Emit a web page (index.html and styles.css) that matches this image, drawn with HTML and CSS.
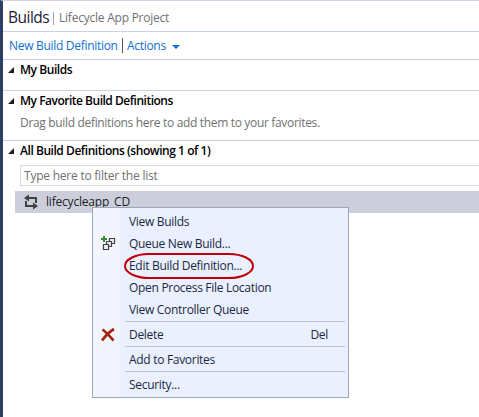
FILE: index.html
```html
<!DOCTYPE html>
<html lang="en">
<head>
<meta charset="utf-8">
<title>Builds</title>
<link rel="stylesheet" href="styles.css">
</head>
<body>
<main class="panel">
  <header class="title"><h1>Builds</h1><i class="title-bar"></i><span class="project">Lifecycle App Project</span></header>
  <nav class="toolbar"><a class="new">New Build Definition</a><i class="divider"></i><a class="actions">Actions</a><svg class="caret" width="8" height="4" viewBox="0 0 8 4"><path d="M0 0h8L4 4z" fill="#0e70d2"/></svg></nav>
  <section class="mine">
    <h2><svg class="tri" width="6" height="6"><path d="M6 0v6H0z"/></svg><span class="h-mine">My Builds</span></h2>
  </section>
  <section class="favorites">
    <h2><svg class="tri" width="6" height="6"><path d="M6 0v6H0z"/></svg><span class="h-fav">My Favorite Build Definitions</span></h2>
    <p class="hint">Drag build definitions here to add them to your favorites.</p>
  </section>
  <section class="all">
    <h2><svg class="tri" width="6" height="6"><path d="M6 0v6H0z"/></svg><span class="h-all">All Build Definitions (showing 1 of 1)</span></h2>
    <div class="filter"><span class="placeholder">Type here to filter the list</span></div>
    <div class="row">
      <svg class="loop" width="14" height="14" viewBox="0 0 14 14"><path d="M4 3H12V8M2 6V11H10" fill="none" stroke="#424242" stroke-width="2"/><path d="M0 3 5 -.5V6.500zM14 11 9 7.500V14.500z" fill="#424242"/></svg>
      <span class="definition">lifecycleapp_CD</span>
      <div class="menu">
        <div class="item"><span>View Builds</span></div>
        <div class="item"><svg class="icon" width="16" height="16" viewBox="0 0 16 16"><path d="M4 0v6M1 3h6" stroke="#388a34" stroke-width="2"/><g fill="#f0f0f8" stroke="#424242" stroke-width="1.200"><path d="M9.500 2.500h5v5h-5z"/><path d="M6.500 5.500h5v5h-5z"/><path d="M3.500 8.500h5v5h-5z"/></g></svg><span>Queue New Build...</span></div>
        <div class="item"><span>Edit Build Definition...</span><svg class="ring" width="130" height="27"><rect x="1" y="1" width="128" height="24" rx="24" ry="12" fill="none" stroke="#c00008" stroke-width="2"/></svg></div>
        <div class="item"><span>Open Process File Location</span></div>
        <div class="item"><span>View Controller Queue</span></div>
        <hr>
        <div class="item"><svg class="icon" width="16" height="16" viewBox="0 0 16 16"><path d="M2.500 2.500C6 5 10 9.500 13.500 13.500" fill="none" stroke="#a1260d" stroke-width="2.700"/><path d="M14 2C9 5 5 9.500 2 13.500" fill="none" stroke="#a1260d" stroke-width="2.700"/></svg><span>Delete</span><span class="key">Del</span></div>
        <hr>
        <div class="item"><span>Add to Favorites</span></div>
        <hr>
        <div class="item"><span>Security...</span></div>
      </div>
    </div>
  </section>
</main>
</body>
</html>
```
FILE: styles.css
```css
* { box-sizing: border-box; }
body {
  margin: 0;
  height: 417px;
  overflow: hidden;
  background: #fff;
  color: #1e1e1e;
  font: 12px/16px "Open Sans", "Noto Sans", sans-serif;
  white-space: nowrap;
}
.panel { height: 417px; border-left: 3px solid #2e3f66; border-top: 1px solid #ccd5e5; }
h1, h2, p { margin: 0; font-weight: 400; }
.title { display: flex; align-items: center; height: 31px; padding: 2px 0 0 5px; border-bottom: 1px solid #c9d3e6; }
h1 { font-size: 15.500px; line-height: 20px; width: 45px; color: #1b2238; font-weight: 500; letter-spacing: -.5px; }
.title-bar { width: 1px; height: 13px; margin: 3px 5px 0 0; background: #a0a5ae; }
.project { color: #717171; margin-top: 2px; letter-spacing: -.23px; }
.toolbar { display: flex; align-items: center; height: 28px; padding-left: 6px; border-bottom: 1px solid #c9d3e6; color: #0e70d2; }
.new { width: 113px; letter-spacing: -.3px; }
.divider { width: 1px; height: 15px; background: #555; margin-right: 4px; }
.actions { width: 45px; letter-spacing: -.3px; }
.caret { margin-top: 3px; }
.mine { height: 31px; border-bottom: 1px solid #c9d3e6; padding-top: 2px; }
.favorites { height: 50px; border-bottom: 1px solid #c9d3e6; padding-top: 2px; }
.all { padding-top: 2px; }
h2 { display: flex; align-items: center; height: 16px; padding-left: 5px; font-size: 12px; font-weight: 600; color: #000; }
.tri { margin-right: 6px; fill: #1e1e1e; }
.h-mine { letter-spacing: -.45px; }
.h-fav { letter-spacing: -.49px; }
.h-all { letter-spacing: -.45px; }
.hint { margin: 6px 0 0 17px; color: #717171; }
.filter { height: 21px; margin: 6px 0 0 17px; padding: 2px 0 0 3px; border: 1px solid #d8d9e3; border-right: 0; color: #717171; }
.row { position: relative; display: flex; align-items: center; height: 22px; margin: 5px 0 0 12px; padding-left: 9px; background: #cccedb; }
.loop { overflow: visible; }
.definition { margin-left: 8px; }
.menu {
  position: absolute;
  left: 77px;
  top: 16px;
  width: 257px;
  height: 191px;
  padding-top: 3px;
  border: 1px solid #9ba7b7;
  background: linear-gradient(90deg, #f2f4fe 27px, #eaf0ff 27px);
}
.item { position: relative; display: flex; align-items: center; height: 22px; padding: 0 20px 0 36px; color: #1b293e; }
.icon { position: absolute; left: 7px; top: 3px; }
.ring { position: absolute; left: 31px; top: -2px; }
.key { margin-left: auto; }
hr { height: 3px; margin: 0 3px 0 32px; border: 0; border-top: 1px solid #bec3cb; }
.item { letter-spacing: -.3px; }
.definition { letter-spacing: -.2px; }
.hint { letter-spacing: -.33px; }
.placeholder { letter-spacing: -.23px; }
```
